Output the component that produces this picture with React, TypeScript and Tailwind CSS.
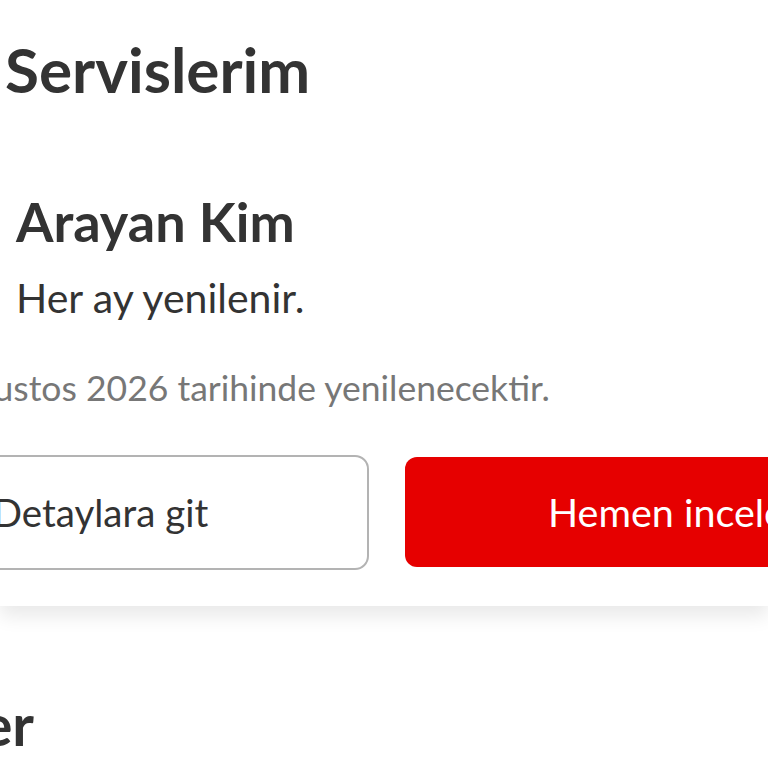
export default function App() {
  return (
    <div className="w-[768px] h-[768px] overflow-hidden bg-white text-[#333333] [font-family:Lato,'Liberation_Sans',sans-serif]">
      <div className="bg-white shadow-[0_10px_18px_rgba(0,0,0,0.09)] relative z-10 pb-[36px]">
        <h1 className="pl-[5px] pt-[33px] text-[62px] leading-[72px] font-bold">Servislerim</h1>

        <div className="mt-[87px] pl-[16px]">
          <h2 className="text-[54px] leading-[60px] font-bold">Arayan Kim</h2>
          <p className="mt-[22px] text-[41px] leading-[48px]">Her ay yenilenir.</p>
        </div>

        <p className="mt-[44px] -ml-[98px] whitespace-nowrap text-[35.5px] leading-[44px] text-[#777777]">
          12 Ağustos 2026 tarihinde yenilenecektir.
        </p>

        <div className="mt-[45px] flex gap-[36px] -ml-[140px] w-[1050px]">
          <button className="w-[509px] h-[115px] rounded-[14px] border-2 border-[#b3b3b3] bg-white pr-[28px] text-[38.5px] text-[#333333] flex items-center justify-center">
            Detaylara git
          </button>
          <button className="mt-[2px] w-[505px] h-[110px] rounded-[12px] bg-[#e60000] pl-[18px] text-[39.5px] text-white flex items-center justify-center">
            Hemen incele
          </button>
        </div>
      </div>

      <div className="bg-white pt-[86px] w-[34px] flex justify-end whitespace-nowrap">
        <h2 className="text-[58px] leading-[64px] font-bold">Size Özel Teklifler</h2>
      </div>
    </div>
  );
}
